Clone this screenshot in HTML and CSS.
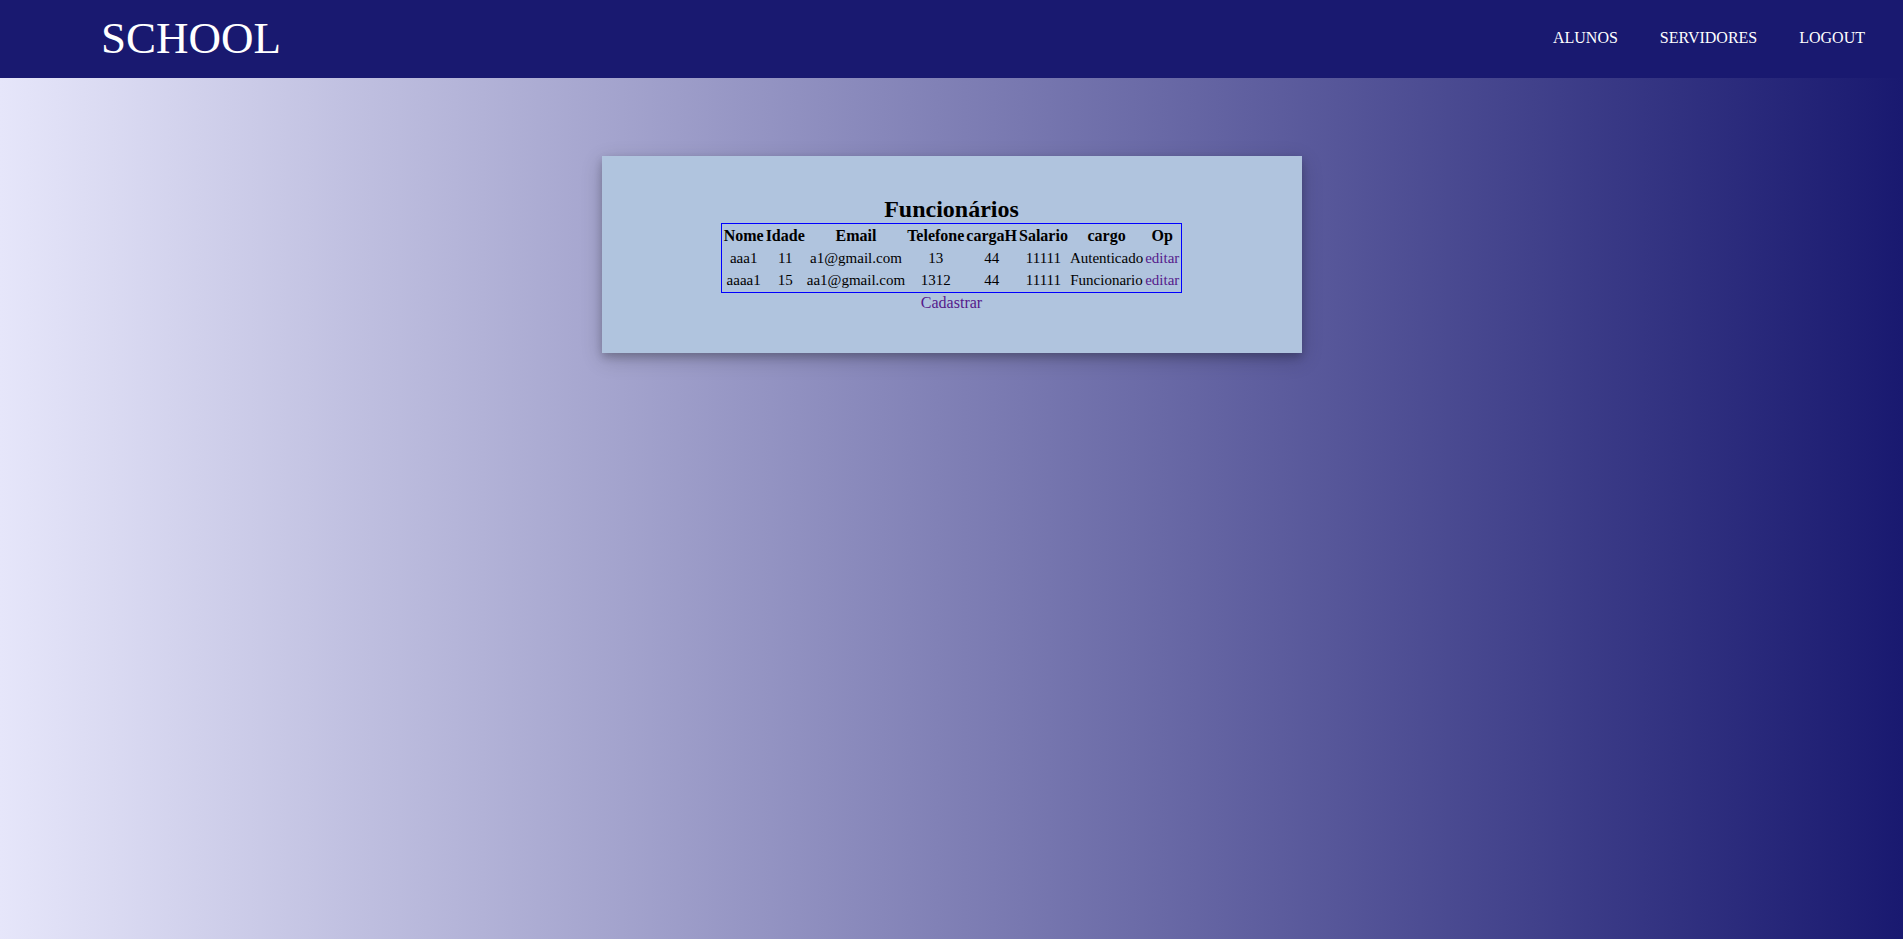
FILE: index.html
```html
<!DOCTYPE html>
<html lang="pt-br">
<head>
<meta charset="utf-8">
<title>School</title>
<link rel="stylesheet" href="styles.css">
</head>
<body>
<header class="topbar">
<a class="logo" href="#">SCHOOL</a>
<nav class="menu">
<a href="#">ALUNOS</a>
<a href="#">SERVIDORES</a>
<a href="#">LOGOUT</a>
</nav>
</header>
<main class="card">
<h2 class="title">Funcionários</h2>
<table class="staff">
<thead>
<tr><th>Nome</th><th>Idade</th><th>Email</th><th>Telefone</th><th>cargaH</th><th>Salario</th><th>cargo</th><th>Op</th></tr>
</thead>
<tbody>
<tr><td>aaa1</td><td>11</td><td>a1@gmail.com</td><td>13</td><td>44</td><td>11111</td><td>Autenticado</td><td><a class="link" href="#">editar</a></td></tr>
<tr><td>aaaa1</td><td>15</td><td>aa1@gmail.com</td><td>1312</td><td>44</td><td>11111</td><td>Funcionario</td><td><a class="link" href="#">editar</a></td></tr>
</tbody>
</table>
<a class="link" href="#">Cadastrar</a>
</main>
</body>
</html>
```
FILE: styles.css
```css
* {
  margin: 0;
  padding: 0;
  box-sizing: border-box;
}

body {
  min-height: 100vh;
  font-family: "Liberation Serif", "Times New Roman", serif;
  font-size: 16px;
  line-height: 20px;
  background: linear-gradient(to right, lavender, midnightblue);
}

a {
  text-decoration: none;
}

.topbar {
  display: flex;
  justify-content: space-between;
  padding: 0 38px 2px 101px;
  background: midnightblue;
}

.logo {
  color: white;
  font-size: 45px;
  line-height: 76px;
}

.menu {
  display: flex;
  gap: 42px;
  line-height: 76px;
}

.menu a {
  color: white;
}

.card {
  display: flex;
  flex-direction: column;
  align-items: center;
  max-width: 700px;
  margin: 78px auto 0;
  padding: 40px;
  background: lightsteelblue;
  box-shadow: 0 4px 8px rgba(0, 0, 0, 0.2), 0 6px 20px rgba(0, 0, 0, 0.19);
}

.title {
  font-size: 24px;
  line-height: 27px;
}

.staff {
  border: 1px solid blue;
  border-spacing: 2px;
  text-align: center;
}

.staff td {
  font-size: 15px;
}

.link {
  color: #551a8b;
}
```
